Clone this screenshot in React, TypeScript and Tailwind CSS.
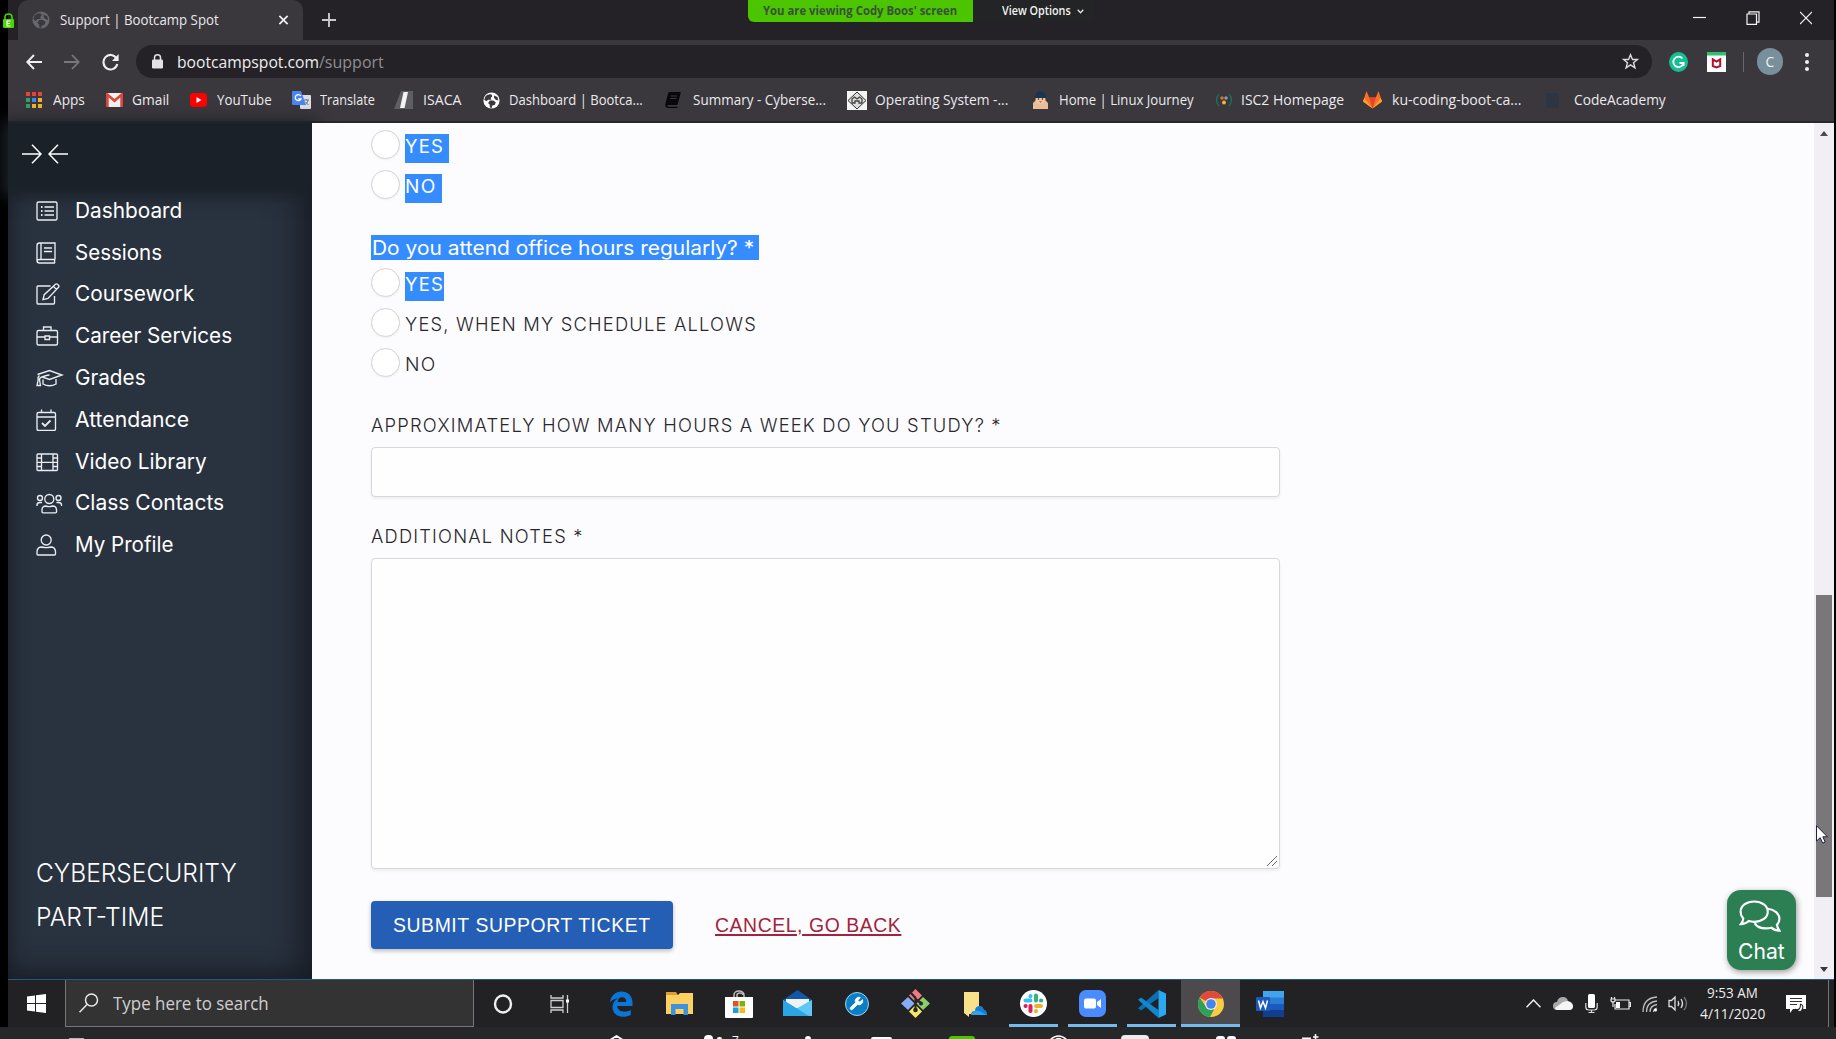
import { useLayoutEffect, useRef, type ReactNode } from "react";
import { Wrench } from "lucide-react";

/** Squeezes or stretches one line of text so that it fills its box. */
function Fit({ className, children }: { className: string; children: ReactNode }) {
  const box = useRef<HTMLSpanElement>(null);
  const line = useRef<HTMLSpanElement>(null);
  useLayoutEffect(() => {
    if (!box.current || !line.current) return;
    const ratio = box.current.clientWidth / line.current.offsetWidth;
    line.current.style.transform = `scaleX(${ratio})`;
  }, []);
  return (
    <span ref={box} className={"block shrink-0 whitespace-nowrap " + className}>
      <span ref={line} className="inline-block origin-left">
        {children}
      </span>
    </span>
  );
}

const segoe = "font-['Open_Sans','Noto_Sans',sans-serif]";
const inter = "font-['Inter',sans-serif]";

function Globe({ color, bg, size }: { color: string; bg: string; size: number }) {
  return (
    <svg width={size} height={size} viewBox="0 0 20 20">
      <circle cx="10" cy="10" r="9.5" fill={color} />
      <path d="M3 5c2-2 5-3 7-2l1 2-2 2 1 2H6L4 11 1.500 9zM8 10h4l3 2-1 3-3 1-1 3-2-1v-3l-2-2zM13 4l4 2 1 4-3-1-2-2z" fill={bg} />
    </svg>
  );
}

function TitleBar() {
  return (
    <div className="relative flex h-10 w-full shrink-0 items-stretch bg-[#242226]">
      <div className="h-10 w-[10px] rounded-br-lg bg-[#242226]" />
      <div className="relative flex w-[285px] items-center rounded-t-[10px] bg-[#3a373d] pl-[14px]">
        <Globe color="#66686d" bg="#3a373d" size={18} />
        <Fit className="ml-[10px] mb-[3px] w-[159px] text-[15px] leading-5 text-[#e9e8ea]">Support | Bootcamp Spot</Fit>
        <svg className="ml-[59px]" width="11" height="12" viewBox="0 0 12 12" stroke="#f2f2f2" strokeWidth="1.900">
          <path d="M1.500 1.500l9 9M10.500 1.500l-9 9" />
        </svg>
      </div>
      <div className="flex w-[51px] items-center justify-center">
        <svg width="14" height="14" viewBox="0 0 14 14" stroke="#c9c9cb" strokeWidth="1.900">
          <path d="M7 0v14M0 7h14" />
        </svg>
      </div>
      <div className="ml-auto flex items-center gap-[40px] pr-[22px] pb-[5px]">
        <svg width="13" height="14" viewBox="0 0 13 14"><path d="M0 6.500h13" stroke="#f2f2f2" strokeWidth="1.200" /></svg>
        <svg width="14" height="14" viewBox="0 0 14 14" fill="none" stroke="#f2f2f2" strokeWidth="1.200">
          <path d="M1 3h9.500v10.400H1zM3 3V.8h10v10.400h-2.500" />
        </svg>
        <svg width="12" height="14" viewBox="0 0 12 14" stroke="#f2f2f2" strokeWidth="1.200"><path d="M0 1l12 12M12 1L0 13" /></svg>
      </div>
      {/* screen-share banner */}
      <div className="absolute left-[740px] top-0 flex h-[22px] overflow-hidden rounded-b-md text-[12.500px] leading-[21px]">
        <div className="w-[225px] bg-[#4bc500] pl-[15px] text-[#39503a]">
          <Fit className="w-[194px] font-bold">You are viewing Cody Boos' screen</Fit>
        </div>
        <div className="flex w-[121px] items-center bg-[#222426] pl-[29px] text-[#f4f4f4]">
          <Fit className="mb-[2px] w-[69px] font-semibold">View Options</Fit>
          <svg className="ml-[6px]" width="7" height="5" viewBox="0 0 7 5" fill="none" stroke="#e4e4e4" strokeWidth="1.300"><path d="M.7.800L3.500 3.700 6.300.800" /></svg>
        </div>
      </div>
    </div>
  );
}

function AddressBar() {
  return (
    <div className="flex h-[43px] shrink-0 items-center bg-[#3a373d]">
      <svg className="ml-[18px]" width="16" height="16" viewBox="0 0 16 16" fill="none" stroke="#f0f0f0" strokeWidth="1.900"><path d="M16 8H1.500M8 1L1.300 8 8 15" /></svg>
      <svg className="ml-[22px]" width="16" height="16" viewBox="0 0 16 16" fill="none" stroke="#79777c" strokeWidth="1.800"><path d="M0 8h14.500M8 1l6.700 7L8 15" /></svg>
      <svg className="ml-[22px]" width="17" height="18" viewBox="0 0 17 18" fill="none" stroke="#f0f0f0" strokeWidth="2.100">
        <path d="M14.500 5.400A7 7.300 0 1 0 15.300 11" />
        <path d="M16.600 1v7H10z" fill="#f0f0f0" stroke="none" />
      </svg>
      <div className="ml-[17px] flex h-[33px] w-[1516px] items-center rounded-full bg-[#242226] text-[17px] leading-6">
        <svg className="ml-[16px]" width="11" height="15" viewBox="0 0 11 15"><rect y="5.500" width="11" height="9" rx="1.200" fill="#e2e1e4" /><path d="M2.500 6V3.800a3 3 0 0 1 6 0V6" fill="none" stroke="#e2e1e4" strokeWidth="1.500" /></svg>
        <Fit className="ml-[14px] w-[142px] text-[#ededef]">bootcampspot.com</Fit>
        <Fit className="w-[65px] text-[#8f8d93]">/support</Fit>
        <svg className="ml-auto mr-[13px]" width="17" height="17" viewBox="0 0 18 18" fill="none" stroke="#dcdbdd" strokeWidth="1.500"><path d="M9 1.800l2.100 5h5.300l-4.200 3.500 1.500 5.400L9 12.600l-4.700 3.100 1.500-5.400L1.600 6.800h5.300z" /></svg>
      </div>
      <svg className="ml-[17px]" width="19" height="20" viewBox="0 0 19 20"><ellipse cx="9.500" cy="10" rx="9.500" ry="10" fill="#15bf94" /><path d="M13.500 6.500A5.200 5.200 0 1 0 14.600 11H10.500M14.600 10v4" fill="none" stroke="#fff" strokeWidth="1.800" /></svg>
      <svg className="ml-[19px]" width="19" height="20" viewBox="0 0 19 20"><path fill="#fff" d="M0 0h19v20H0z" /><path fill="#2fbf71" d="M0 0h19v3.500H0z" /><path d="M5.800 14V7.300l3.700 2.200 3.700-2.200V14l-3.700 1.500z" fill="none" stroke="#b3122d" strokeWidth="2" /></svg>
      <div className="ml-[17px] h-5 w-px bg-[#6a686d]" />
      <div className="ml-[13px] flex h-[27px] w-[26px] items-center justify-center rounded-full bg-[#78909c] text-[14px] text-[#eef1f3]">C</div>
      <div className="ml-[22px] flex flex-col gap-[3px]">
        <i className="block h-[4px] w-[4px] rounded-full bg-[#efeff0]" /><i className="block h-[4px] w-[4px] rounded-full bg-[#efeff0]" /><i className="block h-[4px] w-[4px] rounded-full bg-[#efeff0]" />
      </div>
    </div>
  );
}

const dots = ["bg-[#ea4335]", "bg-[#ea4335]", "bg-[#ea4335]", "bg-[#34a06b]", "bg-[#4285f4]", "bg-[#f6b12b]", "bg-[#34a06b]", "bg-[#f6b12b]", "bg-[#f6b12b]"];

const bookmarks = [
  { text: "Apps", cell: "w-[80px]", label: "ml-[9px] w-[32px]", icon: <div className="grid grid-cols-3 gap-x-[2px] gap-y-[1.500px]">{dots.map((c, i) => <i key={i} className={"block h-[4.500px] w-[4px] " + c} />)}</div> },
  { text: "Gmail", cell: "w-[84px]", label: "ml-[8px] w-[37px]", icon: <svg width="17" height="14" viewBox="0 0 17 14"><path fill="#f3f0ee" d="M0 0h17v14H0z" /><path fill="#d9483b" d="M0 0h1.500l7 6 7-6H17v14h-2.700V4.500L8.500 9.500 2.700 4.500V14H0z" /></svg> },
  { text: "YouTube", cell: "w-[103px]", label: "ml-[9px] w-[55px]", icon: <svg width="17" height="14" viewBox="0 0 17 14"><rect width="17" height="14" rx="3.500" fill="#f00" /><path d="M6.500 4v6l5-3z" fill="#fff" /></svg> },
  { text: "Translate", cell: "w-[102px]", label: "ml-[9px] w-[55px]", icon: <svg width="19" height="18" viewBox="0 0 19 18"><rect x="8" y="4" width="11" height="14" rx="1" fill="#dcdfe3" /><path d="M1 0h8l5 14H1a1 1 0 0 1-1-1V1a1 1 0 0 1 1-1z" fill="#4a86ef" /><path d="M8.800 5A3 3 0 1 0 9 8H6.300" fill="none" stroke="#fff" strokeWidth="1.300" /><path d="M12 9h5M14.500 8v1M16 9c-.5 3-2 4-3 5M13.500 11l3 3" stroke="#667b93" fill="none" /></svg> },
  { text: "ISACA", cell: "w-[88px]", label: "ml-[10px] w-[38px]", icon: <svg width="19" height="18" viewBox="0 0 19 18"><path fill="#5f5e62" d="M7 0h12v18H0z" /><path fill="#f4f4f4" d="M9.500 1H14l-3.500 16H6z" /></svg> },
  { text: "Dashboard | Bootca...", cell: "w-[182px]", label: "ml-[8px] w-[134px]", icon: <Globe color="#fff" bg="#3a373d" size={17} /> },
  { text: "Summary - Cyberse...", cell: "w-[184px]", label: "ml-[10px] w-[133px]", icon: <svg width="16" height="16" viewBox="0 0 16 16"><path d="M4.500 0H15q1 0 .7 1l-3 11q-.3 1-1.300 1H3q-1 1 0 1.800h9.500V16H2.500Q-.3 15.500.4 12L3 1.500Q3.300 0 4.500 0z" fill="#08080a" /><path d="M6 4h6M5.400 6.500h6" stroke="#3d3b40" strokeWidth="1.100" /></svg> },
  { text: "Operating System -...", cell: "w-[183px]", label: "ml-[8px] w-[133px]", icon: <svg width="20" height="19" viewBox="0 0 20 19"><path fill="#f4f4f4" d="M0 0h20v19H0z" /><path d="M10 1l9 8.500-9 8.500-9-8.500z" fill="#ddd" stroke="#333" /><path d="M5 12V8l2.500-2L10 8l2.500-2L15 8v4h-3v-2h-4v2z" fill="none" stroke="#444" strokeWidth="1.300" /></svg> },
  { text: "Home | Linux Journey", cell: "w-[184px]", label: "ml-[9px] w-[135px]", icon: <svg width="17" height="18" viewBox="0 0 17 18"><path d="M1 18v-6l3-3h9l3 3v6z" fill="#e9bd97" /><circle cx="8.500" cy="8" r="5" fill="#efc9a6" /><path d="M3 7c0-9 11-9 11 0z" fill="#173550" /><circle cx="6.500" cy="8" r=".8" fill="#222" /><circle cx="10.500" cy="8" r=".8" fill="#222" /><path d="M7 10h3l-1.500 2z" fill="#d6632d" /></svg> },
  { text: "ISC2 Homepage", cell: "w-[148px]", label: "ml-[7px] w-[103px]", icon: <svg width="18" height="14" viewBox="0 0 18 14"><path d="M4 1Q-1 7 4 13M14 1q5 6 0 12" fill="none" stroke="#16705a" strokeWidth="1.500" /><circle cx="7" cy="5" r="1.800" fill="#dd6b35" /><circle cx="11" cy="5" r="1.800" fill="#8e9aa8" /><circle cx="9" cy="9.500" r="1.900" fill="#f1b92d" /></svg> },
  { text: "ku-coding-boot-ca...", cell: "w-[180px]", label: "ml-[10px] w-[129px]", icon: <svg width="19" height="18" viewBox="0 0 19 18"><path fill="#fc6d26" d="M9.500 17.500L0 10.500 3.500 0l2.700 6.500h6.600L15.500 0 19 10.500z" /><path fill="#e24329" d="M9.500 17.500L6.200 6.500h6.600z" /><path fill="#fca326" d="M9.500 17.500L0 10.500l1.200-3.500zM9.500 17.500l9.500-7-1.200-3.500z" /></svg> },
  { text: "CodeAcademy", cell: "w-[140px]", label: "ml-[12px] w-[92px]", icon: <div className="h-[15px] w-[13px] border border-[#24384f] bg-[#30343f]" /> },
];

function Bookmarks() {
  return (
    <div className="flex h-[40px] shrink-0 border-b-2 border-[#29272c] bg-[#3a373d] pb-1 pl-[16px]">
      {bookmarks.map((b) => (
        <div key={b.text} className={"flex shrink-0 items-center " + b.cell}>
          <span className="flex w-5 shrink-0 justify-center">{b.icon}</span>
          <Fit className={"text-[14.500px] leading-5 text-[#ebeaec] " + b.label}>{b.text}</Fit>
        </div>
      ))}
    </div>
  );
}

const menu = [
  { name: "Dashboard", w: "w-[107px]", icon: <><rect x="1" y="2" width="20" height="18" rx="1.500" /><path d="M5 7h1.500M5 11h1.500M5 15h1.500" strokeWidth="2" /><path d="M8.500 7H18M8.500 11H18M8.500 15H18" /></> },
  { name: "Sessions", w: "w-[87px]", icon: <><path d="M19 17.500V1H3.500Q1 1 1 3.500v15Q1 21 3.500 21H19M19 17.500H3.500Q1 17.500 1 19.500M19 17.500q-1 1.500 0 3.500M5 1v16.500" /><path d="M8 6h8M8 9.500h8" strokeWidth="1.700" /></> },
  { name: "Coursework", w: "w-[119px]", icon: <><path d="M14.500 3H2Q1 3 1 4v16q0 1 1 1h15.500q1 0 1-1v-7" /><path d="M19.500 1.300q1-.9 2 0l1 1q.9 1 0 2L12 15.500l-5 1.200 1.200-5zM17.500 3.500l3 3" /></> },
  { name: "Career Services", w: "w-[157px]", icon: <><rect x="1" y="5.500" width="20.500" height="14.500" rx="1.500" /><path d="M7.500 5.500V2H15v3.500M1 12h8M13.500 12h8M9 11h4.500v3.500H9z" /></> },
  { name: "Grades", w: "w-[71px]", icon: <><path d="M1.500 7.500L13.500 3.500 26 8l-12.500 4.500L6 10q5-2 7.500-2M6 10q-2.500.5-2.500 3M3.500 8.500Q1.500 10 2.200 12.500L1 18.500h3.500l-1-5.500M7 12.500v4.500q6.500 3.500 13 0v-5" /></> },
  { name: "Attendance", w: "w-[114px]", icon: <><rect x="1" y="3.500" width="18.500" height="18" rx="1.500" /><path d="M1 8h18.500M5.500.5v3M15 .5v3" /><path d="M6 14l3 3 5.500-5.500" strokeWidth="1.800" /></> },
  { name: "Video Library", w: "w-[132px]", icon: <><rect x="1" y="3" width="20.500" height="16.500" rx="1" /><path d="M5.500 3v16.500M17 3v16.500M5.500 11.300H17M1 7h4.500M1 11.300h4.500M1 15.500h4.500M17 7h4.500M17 11.300h4.500M17 15.500h4.500" /></> },
  { name: "Class Contacts", w: "w-[149px]", icon: <><circle cx="13.300" cy="7" r="4.500" /><circle cx="4" cy="6" r="2.500" /><circle cx="22.500" cy="6" r="2.500" /><path d="M6 20v-2q0-4 4-4 3 1.200 6.500 0 4 0 4 4v2q0 .8-1 .8H7q-1 0-1-.8zM1 14v-1q0-2.500 3-2.500h2M25.500 14v-1q0-2.500-3-2.500h-2" /></> },
  { name: "My Profile", w: "w-[99px]", icon: <><circle cx="10.200" cy="6" r="5" /><path d="M1 20v-2q0-5 5-5 4 1.300 8.500 0 5 0 5 5v2q0 1-1 1H2q-1 0-1-1z" /></> },
];

function Sidebar() {
  return (
    <div className={"flex w-[304px] shrink-0 flex-col bg-[#29323f] text-white shadow-[inset_-18px_-12px_32px_-8px_#171c24,inset_8px_0_20px_-8px_#171c24] " + inter}>
      <div className="flex h-[64px] items-center gap-[6px] bg-[#1b2128] pb-[2px] pl-[14px] shadow-[0_4px_14px_6px_#1b2128]">
        <svg width="20" height="20" viewBox="0 0 20 20" fill="none" stroke="#fff" strokeWidth="1.500"><path d="M0 10h18.500M10 .8L19 10l-9 9.200" /></svg>
        <svg width="20" height="20" viewBox="0 0 20 20" fill="none" stroke="#fff" strokeWidth="1.500"><path d="M20 10H1.500M10 .8L1 10l9 9.200" /></svg>
      </div>
      <nav className="relative flex flex-col pl-[28px] pt-[3px]">
        {menu.map((m) => (
          <div key={m.name} className="flex h-[41.800px] items-center">
            <svg className="w-[39px] shrink-0" width="39" height="22" viewBox="0 0 39 22" fill="none" stroke="#e9edf2" strokeWidth="1.350">{m.icon}</svg>
            <Fit className={"text-[21px] leading-7 " + m.w}>{m.name}</Fit>
          </div>
        ))}
      </nav>
      <div className="mt-auto pb-[40px] pl-[28px] text-[26px] font-light leading-[44px]">
        <Fit className="w-[201px]">CYBERSECURITY</Fit>
        <Fit className="w-[128px]">PART-TIME</Fit>
      </div>
    </div>
  );
}

function Choice({ children, picked, w, hl }: { children: string; picked?: boolean; w: string; hl?: string }) {
  return (
    <div className="flex h-10 items-center">
      <div className="h-[29px] w-[29px] shrink-0 rounded-full border border-[#d3d2d5] bg-white shadow-[0_1px_2px_#0000000d]" />
      <div className={"relative top-[4px] ml-[5px] h-[29px] " + (picked ? "bg-[#348cff] text-white " : "font-light text-[#29272c] ") + (hl ?? "")}>
        <Fit className={"text-[18.500px] leading-[24px] tracking-[1.200px] " + w}>{children}</Fit>
      </div>
    </div>
  );
}

function Form() {
  return (
    <div className={"relative min-w-0 flex-1 overflow-hidden bg-[#fcfcfe] pl-[59px] text-[#29272c] " + inter}>
      <div className="pt-[1px]">
        <Choice picked w="w-[39px]" hl="w-[44px]">YES</Choice>
        <Choice picked w="w-[31px]" hl="w-[37px]">NO</Choice>
      </div>
      <div className="mt-[31px] h-[25px] w-[388px] bg-[#348cff] pl-[0.500px] text-[20px] leading-[26px] text-white">
        <Fit className="w-[382px]">Do you attend office hours regularly? *</Fit>
      </div>
      <div className="mt-[2px]">
        <Choice picked w="w-[39px]" hl="w-[39px]">YES</Choice>
        <Choice w="w-[352px]">YES, WHEN MY SCHEDULE ALLOWS</Choice>
        <Choice w="w-[31px]">NO</Choice>
      </div>
      <div className="mt-[29px] text-[18.500px] font-light leading-[28px] tracking-[1.200px]">
        <Fit className="w-[631px]">APPROXIMATELY HOW MANY HOURS A WEEK DO YOU STUDY? *</Fit>
      </div>
      <div className="mt-[8px] h-[50px] w-[909px] rounded border border-[#d8d8db] bg-[#fefefe] shadow-[0_2px_3px_#0000000f]" />
      <div className="mt-[25px] text-[18.500px] font-light leading-[28px] tracking-[1.200px]">
        <Fit className="w-[213px]">ADDITIONAL NOTES *</Fit>
      </div>
      <div className="mt-[8px] flex h-[311px] w-[909px] items-end justify-end rounded border border-[#d8d8db] bg-[#fefefe] p-[2px] shadow-[0_2px_3px_#0000000f]">
        <svg width="10" height="10" viewBox="0 0 10 10" stroke="#6b6b70"><path d="M0 10L10 0M5 10l5-5" /></svg>
      </div>
      <div className="mt-[32px] flex items-center font-['Liberation_Sans',Arial,sans-serif] text-[20px] tracking-[.6px]">
        <div className="flex h-[48px] w-[302px] items-center rounded bg-[#245eb5] pl-[22px] text-white shadow-[0_2px_4px_#00000040]">
          <Fit className="w-[258px]">SUBMIT SUPPORT TICKET</Fit>
        </div>
        <div className="ml-[42px] text-[#a3233c]">
          <Fit className="w-[186px]">
            <span className="underline decoration-[1.500px] underline-offset-[2px]">CANCEL, GO BACK</span>
          </Fit>
        </div>
      </div>
      <div className="absolute left-[1415px] top-[767px] flex h-[80px] w-[69px] flex-col items-center rounded-[14px] bg-[#2c7f53] pt-[10px] text-white shadow-[1px_2px_6px_#00000066]">
        <svg className="mr-[3px] shrink-0" width="42" height="33" viewBox="0 0 42 34" fill="none" stroke="#fff" strokeWidth="2.200">
          <path d="M15 1.500C23 1.500 29 6 29 12s-6 10.500-14 10.500q-3 0-5.500-.8Q6 25 1.200 25q2.300-2.500 2.600-6Q1 16 1 12C1 6 7 1.500 15 1.500z" />
          <path d="M29 9c7 .8 12 5 12 10.500q0 3.500-2.600 6 .4 3 2.600 6-5 0-8.300-3-2.700.8-5.700.8c-5 0-9.500-2-11.500-5.500" />
        </svg>
        <Fit className="mt-[2px] w-[47px] text-[22px] leading-[32px]">Chat</Fit>
      </div>
    </div>
  );
}

function Scrollbar() {
  return (
    <div className="relative flex w-5 shrink-0 flex-col items-center bg-[#f1eff3]">
      <svg className="mt-[8px]" width="8" height="5" viewBox="0 0 8 5"><path d="M4 0l4 5H0z" fill="#4b494d" /></svg>
      <div className="mt-[459px] h-[302px] w-[16px] bg-[#79777a]" />
      <svg className="mt-auto mb-[7px]" width="8" height="5" viewBox="0 0 8 5"><path d="M4 5L0 0h8z" fill="#39373b" /></svg>
      <svg className="absolute left-[2px] top-[702px]" width="12" height="19" viewBox="0 0 12 19"><path d="M.5.700V16l3.700-3.300 2.500 5.500 2.500-1.200-2.400-5.200h4.600z" fill="#fff" stroke="#222039" /></svg>
    </div>
  );
}

const apps = [
  { id: "cortana", icon: <svg width="20" height="20" viewBox="0 0 20 20"><ellipse cx="10" cy="10" rx="8" ry="8.500" fill="none" stroke="#efefef" strokeWidth="2.400" /></svg> },
  { id: "taskview", icon: <svg className="mr-[3px]" width="20" height="20" viewBox="0 0 20 20" fill="none" stroke="#cfcfcf" strokeWidth="1.300"><path d="M1 1v3h12V1M1 19v-3h12v3M1 6.500h12v7H1zM17.500 1v18" /><path d="M16 5.500h3v3h-3z" fill="#fff" stroke="none" /></svg> },
  { id: "edge", icon: <svg width="24" height="26" viewBox="0 0 24 26"><path d="M1 11.500C2 4 7 .5 12.500.5 19 .5 23.500 5 23.500 11.500V15H8.300c.2 4 3.500 5.700 7 5.700 2.500 0 4.700-.7 6.500-1.700v5c-2.200 1.200-5 1.800-8 1.800-6 0-10.300-4-10.300-9.500 0-4 2-7 5.500-8.800C6 7.500 3 9 1 11.500zM8.500 11h8.800c0-3-1.500-4.800-4.200-4.800S9 8 8.500 11z" fill="#0a76d6" /></svg> },
  { id: "explorer", icon: <svg width="27" height="23" viewBox="0 0 27 23"><path d="M0 0h10l2 3H0z" fill="#dd9f35" /><path d="M0 3h12l2-2h13v21H0z" fill="#fcd161" /><path d="M5 23V12h17v11h-4.500v-6h-8v6z" fill="#3c92dc" /></svg> },
  { id: "store", icon: <svg width="28" height="28" viewBox="0 0 28 28"><path d="M9 8V5a5 4 0 0 1 10 0v3M12 8V5a3 2 0 0 1 6 0" fill="none" stroke="#bbb" strokeWidth="1.500" /><path d="M0 7h28v20q0 1-1 1H1q-1 0-1-1z" fill="#fff" /><path d="M8 11h5.500v5.500H8z" fill="#e0502a" /><path d="M14.500 11H20v5.500h-5.500z" fill="#7cb305" /><path d="M8 17.500h5.500V23H8z" fill="#15a0ea" /><path d="M14.500 17.500H20V23h-5.500z" fill="#fbb810" /></svg> },
  { id: "mail", icon: <svg width="29" height="27" viewBox="0 0 29 27"><path d="M0 10L14.500 0 29 10v3H0z" fill="#1159a8" /><path d="M3 9h23v9H3z" fill="#f2f2f2" /><path d="M0 10l14.500 9L29 10v16H0z" fill="#35b6ee" /><path d="M29 26V10L0 26z" fill="#5cc8f5" /><path d="M0 26V10l26 16z" fill="#2aa6e4" /></svg> },
  { id: "wrench", icon: <span className="flex h-6 w-6 items-center justify-center rounded-full border-[1.500px] border-[#9cd4f2] bg-[#0a7fc6]"><Wrench size={15} color="#fff" fill="#fff" strokeWidth={1.500} /></span> },
  { id: "git", icon: <svg width="29" height="29" viewBox="0 0 29 29"><path d="M14.500 0L21 6.500l-6.500 6.500L8 6.500z" fill="#ee7b7f" /><path d="M22 8l7 6.500-7 6.500-6.500-6.500z" fill="#8ccf6a" /><path d="M14.500 16l6.500 6.500-6.500 6.500L8 22.500z" fill="#f5e768" /><path d="M7 8l6.500 6.500L7 21 0 14.500z" fill="#82aef5" /><path d="M10 4l4.500 5v12M14.500 10l6 4.500" stroke="#29252b" strokeWidth="2.200" fill="none" /><circle cx="14.500" cy="21" r="2.300" fill="#29252b" /><circle cx="20" cy="14.500" r="2" fill="#29252b" /></svg> },
  { id: "folder", icon: <svg width="24" height="26" viewBox="0 0 24 26"><path d="M1 1h15v22H6v3l-5-4z" fill="#f9e08a" /><path d="M8 24q0-4 4-4 0-5 5-5 3 0 4 4 3 0 3 5z" fill="#1380d6" /><path d="M8 24q3-5 8-4l8 4z" fill="#35a3ec" /></svg> },
  { id: "slack", run: "w-[49px]", icon: <svg width="27" height="27" viewBox="0 0 27 27"><circle cx="13.500" cy="13.500" r="13.500" fill="#fff" /><g strokeWidth="4" strokeLinecap="round"><path d="M10.500 6v.2M5.500 10.500h5" stroke="#36c5f0" /><path d="M16 5.500v5M21 10.500h.2" stroke="#2eb67d" /><path d="M16 16h5M16 21v.2" stroke="#ecb22e" /><path d="M10.500 16v5M5.500 16h.2" stroke="#e01e5a" /></g></svg> },
  { id: "zoom", run: "w-[49px]", icon: <svg width="27" height="27" viewBox="0 0 27 27"><rect width="27" height="27" rx="7" fill="#4a8cff" /><rect x="5" y="8.500" width="12" height="10" rx="2" fill="#fff" /><path d="M18 12l4-3v9l-4-3z" fill="#fff" /></svg> },
  { id: "vscode", run: "w-[49px]", icon: <svg width="28" height="28" viewBox="0 0 28 28"><path d="M20.500 0v8L3 20.500 0 18.300z" fill="#0a6fb5" /><path d="M20.500 28v-8L3 7.500 0 9.700z" fill="#1187d0" /><path d="M20.500 0L28 3.500v21L20.500 28z" fill="#2aa8f2" /></svg> },
  { id: "chrome", run: "w-[59px]", active: true, icon: <svg width="26" height="26" viewBox="0 0 26 26"><circle cx="13" cy="13" r="13" fill="#fcca3f" /><path d="M13 13L1.700 6.500A13 13 0 0 1 24.800 7.500H13z" fill="#e04a3b" /><path d="M1.700 6.500A13 13 0 0 0 12 26l5-9.500H8.500z" fill="#2da05a" /><circle cx="13" cy="13" r="6" fill="#f1f1f1" /><circle cx="13" cy="13" r="4.800" fill="#4683ee" /></svg> },
  { id: "word", icon: <svg width="28" height="26" viewBox="0 0 28 26"><path d="M7 0h21v7H7z" fill="#41a5ee" /><path d="M7 6.500h21V13H7z" fill="#2b7cd3" /><path d="M7 13h21v6.500H7z" fill="#185abd" /><path d="M7 19.500h21V26H7z" fill="#103f91" /><rect y="6" width="14" height="14" rx="1" fill="#1b5abd" /><path d="M2.500 9.500l2 7.500L7 10.500 9.500 17l2-7.500" fill="none" stroke="#fff" strokeWidth="1.500" /></svg> },
];

function Taskbar() {
  return (
    <div className="flex h-[48px] shrink-0 border-t border-[#1d5b8c] bg-[#222123]">
      <div className="flex w-[57px] items-center pl-[19px]">
        <svg width="19" height="19" viewBox="0 0 19 19" fill="#fff"><path d="M0 2.500L8 1.400V9H0zM9 1.200L19 0v9H9zM0 10h8v7.500l-8-1.100zM9 10h10v9l-10-1.300z" /></svg>
      </div>
      <div className="flex w-[409px] items-center border border-t-0 border-[#77757a] bg-[#343334]">
        <svg className="ml-[13px]" width="20" height="20" viewBox="0 0 20 20" fill="none" stroke="#e9e9e9" strokeWidth="1.500"><circle cx="12.500" cy="7" r="6" /><path d="M8 11.500L.5 19.300" /></svg>
        <Fit className="ml-[14px] mb-px w-[156px] text-[18px] leading-6 text-[#cfced0]">Type here to search</Fit>
      </div>
      <div className="ml-[-1px] flex w-[826px]">
        {apps.map((a) => (
          <div key={a.id} className={"relative flex w-[59px] items-center justify-center " + (a.active ? "bg-[#4c4a4d]" : "")}>
            {a.icon}
            {a.run && <div className={"absolute bottom-0 h-[3px] bg-[#76b9ed] " + a.run} />}
          </div>
        ))}
      </div>
      <div className="ml-auto flex items-center">
        <svg width="15" height="9" viewBox="0 0 15 9" fill="none" stroke="#eee" strokeWidth="1.500"><path d="M.5 8.300L7.500 1l7 7.300" /></svg>
        <svg className="ml-[12px]" width="20" height="13" viewBox="0 0 20 13"><path d="M0 9q0-4 4-4 1-5 6-5 4 0 5 4 5 1 5 5 0 4-4 4H4q-4 0-4-4z" fill="#a9a9aa" /><path d="M2 11l8-6 4-1q5 1 6 5 0 4-4 4H4q-1.500 0-2-2z" fill="#f5f5f5" /></svg>
        <svg className="ml-[12px]" width="13" height="19" viewBox="0 0 13 19"><rect x="3" width="7" height="14" rx="1.500" fill="#fff" /><path d="M.8 9v4q0 3 3 3h5.400q3 0 3-3V9M6.500 16v2.500M3.500 18.500h6" fill="none" stroke="#ddd" strokeWidth="1.200" /></svg>
        <svg className="ml-[12px]" width="21" height="14" viewBox="0 0 21 14" fill="none" stroke="#e8e8e8" strokeWidth="1.200"><path d="M5 3h14v9H5V7M19 5.500h1.500v4H19M1.500 0v2M4.500 0v2M1 2h4v2q-2 2-4 0zM3 5v5" /><path d="M6 5h4v6H6z" fill="#fff" stroke="none" /></svg>
        <svg className="ml-[11px]" width="16" height="16" viewBox="0 0 16 16" fill="none" stroke="#bdbdbd" strokeWidth="1.300"><path d="M1 16Q1 2 15 1M4.500 16q0-10 10.500-11M8 16q0-6.500 7-7.500M11.500 16q0-3 3.500-4" /><circle cx="13.500" cy="14" r="1.500" fill="#fff" stroke="none" /></svg>
        <svg className="ml-[10px]" width="20" height="17" viewBox="0 0 20 17" fill="none" stroke="#e0e0e0" strokeWidth="1.300"><path d="M1 5.500h2.500L7 2v13l-3.500-3.500H1zM10 6q1.500 2.500 0 5M13 4q3 4.500 0 9" /><path d="M16 2q5 6.500 0 13" stroke="#77767a" /></svg>
        <div className="ml-[12px] mb-px flex w-[65px] flex-col items-center text-[14px] leading-[21.500px] text-[#ededee]">
          <Fit className="w-[51px]">9:53 AM</Fit>
          <Fit className="w-[65px]">4/11/2020</Fit>
        </div>
        <svg className="ml-[21px]" width="20" height="20" viewBox="0 0 20 20"><path d="M0 1h20v14H7l-3 4v-4H0z" fill="#fff" /><path d="M4 4.500h12M4 7.500h12M4 10.500h7" stroke="#333" strokeWidth="1.200" /><path d="M14 10q5 1 1.500 7-3 1.500-5-1.500 4 1 4-5.500" fill="#fff" stroke="#222123" strokeWidth="1.100" /></svg>
        <div className="ml-[22px] mr-[5px] h-[47px] w-px bg-[#77767a]" />
      </div>
    </div>
  );
}

function MeetingBar() {
  return (
    <div className="flex h-[12px] shrink-0 items-end overflow-hidden bg-[#262729]">
      <div className="ml-[69px] h-[1px] w-[15px] bg-[#b6b6b7]" />
      <svg className="ml-[526px]" width="13" height="4" viewBox="0 0 13 4" fill="none" stroke="#fff" strokeWidth="1.800"><path d="M0 5l6.500-4L13 5" /></svg>
      <div className="ml-[81px] h-[4px] w-[9px] rounded-t-full bg-white" />
      <div className="ml-[4px] h-[2px] w-[5px] rounded-t-full bg-white" />
      <div className="ml-[10px] h-[4px] w-[9px] text-[12px] leading-[12px] text-white">7</div>
      <div className="ml-[64px] h-[3px] w-[6px] rounded-t-full bg-white" />
      <div className="ml-[60px] h-[2px] w-[21px] rounded-t bg-white" />
      <div className="ml-[57px] h-[3px] w-[26px] rounded-t bg-[#4bc500]" />
      <svg className="ml-[75px]" width="17" height="4" viewBox="0 0 17 4" fill="none" stroke="#fff" strokeWidth="1.500"><path d="M0 5q8.500-8 17 0M5 5q3.500-3 7 0" /></svg>
      <div className="ml-[54px] h-[4px] w-[28px] rounded-t bg-[#ececec]" />
      <div className="ml-[67px] h-[3px] w-[9px] rounded-t-sm bg-white" />
      <div className="ml-[2px] h-[3px] w-[9px] rounded-t-sm bg-white" />
      <svg className="ml-[66px]" width="17" height="5" viewBox="0 0 17 5" stroke="#fff" strokeWidth="1.500"><path d="M0 4.300h9M13.500 0v5M11 3h5.500" /></svg>
    </div>
  );
}

export default function App() {
  return (
    <div className={"relative flex h-[1039px] w-[1836px] flex-col overflow-hidden bg-black " + segoe}>
      <div className="ml-[8px] mr-[2px] flex min-h-0 flex-1 flex-col">
        <TitleBar />
        <AddressBar />
        <Bookmarks />
        <div className="flex min-h-0 flex-1">
          <Sidebar />
          <Form />
          <Scrollbar />
        </div>
        <Taskbar />
      </div>
      <MeetingBar />
      <svg className="absolute left-[3px] top-[13px]" width="11" height="15" viewBox="0 0 11 15">
        <path d="M2 7V4q0-3 3.500-3T9 4v3" fill="none" stroke="#4bd400" strokeWidth="1.600" />
        <rect y="6" width="11" height="9" rx="1" fill="#4bd400" />
        <path d="M7.500 8H4v5h3.500M4 10.500h3" fill="none" stroke="#fff" strokeWidth="1.200" />
      </svg>
    </div>
  );
}
